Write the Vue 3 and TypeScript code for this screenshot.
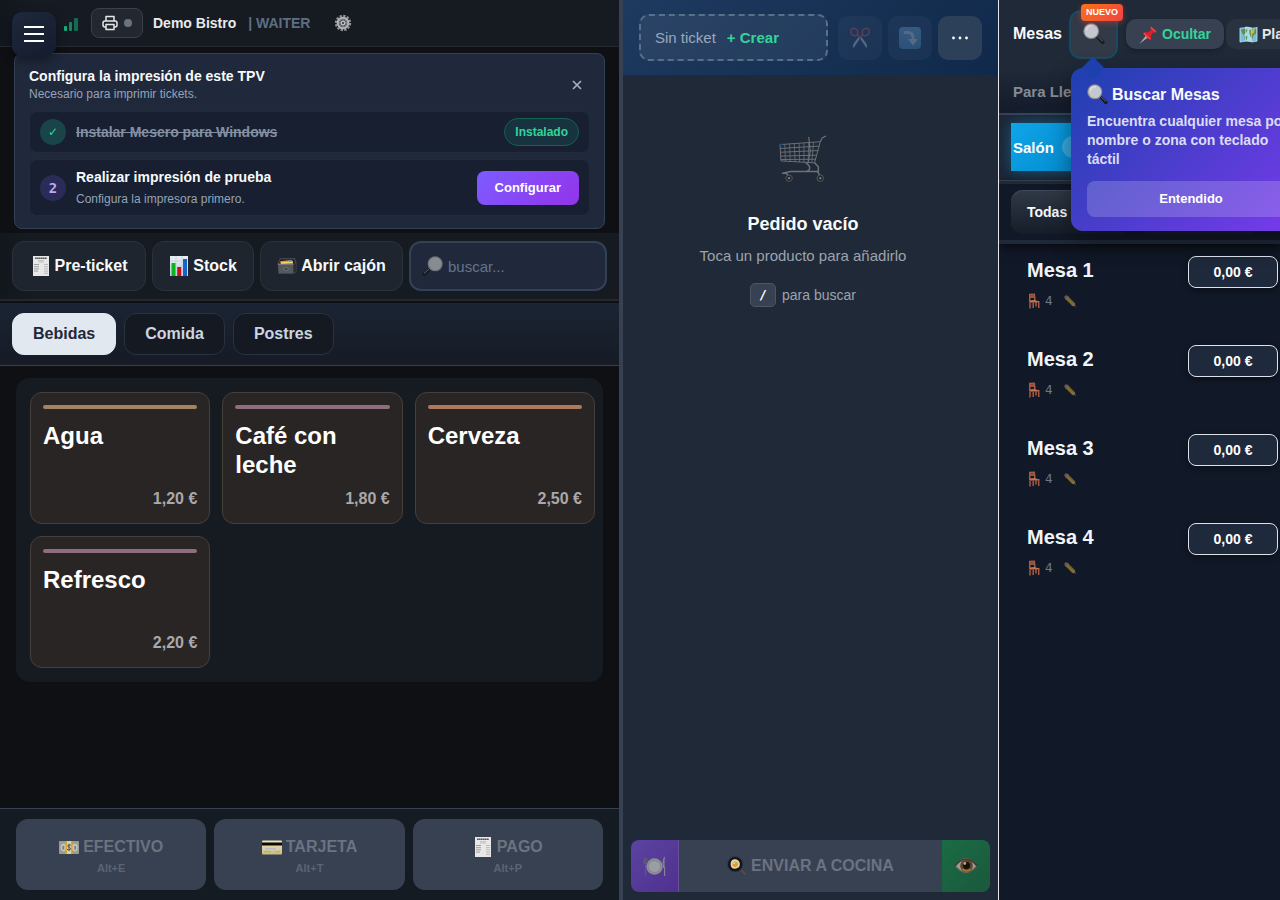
<script setup lang="ts">
import { ref } from 'vue'

interface Product { name: string; price: string; tone: string }
interface Payment { label: string; key: string; icon: string }

const categories = ['Bebidas', 'Comida', 'Postres']
const activeCategory = ref('Bebidas')
const query = ref('')

const products: Product[] = [
  { name: 'Agua', price: '1,20 €', tone: 'sand' },
  { name: 'Café con leche', price: '1,80 €', tone: 'mauve' },
  { name: 'Cerveza', price: '2,50 €', tone: 'copper' },
  { name: 'Refresco', price: '2,20 €', tone: 'mauve' },
]

const payments: Payment[] = [
  { label: 'EFECTIVO', key: 'Alt+E', icon: 'cash' },
  { label: 'TARJETA', key: 'Alt+T', icon: 'card' },
  { label: 'PAGO', key: 'Alt+P', icon: 'receipt' },
]

const tables = ['Mesa 1', 'Mesa 2', 'Mesa 3', 'Mesa 4']
</script>

<template>
  <div class="app">
    <svg class="sprite" aria-hidden="true">
      <defs>
        <linearGradient id="g-sheet" x1="0" y1="0" x2="0" y2="1"><stop offset="0" stop-color="#e9eef2" /><stop offset="1" stop-color="#bcd4e6" /></linearGradient>
        <linearGradient id="g-key" x1="0" y1="0" x2="0" y2="1"><stop offset="0" stop-color="#6f9cc6" /><stop offset="1" stop-color="#4f86b8" /></linearGradient>
        <linearGradient id="g-card" x1="0" y1="0" x2="0" y2="1"><stop offset="0" stop-color="#f0e6b8" /><stop offset="1" stop-color="#c9bb83" /></linearGradient>
      </defs>
      <symbol id="receipt" viewBox="0 0 20 20">
        <path d="M2 0h16v20H2z" fill="#e8e8e8" />
        <path d="M4 2.2h12" stroke="#555" stroke-width="1.6" stroke-dasharray="1.6 .3" />
        <path d="M7 4.6h6M7 6h6" stroke="#b0b0b0" stroke-width=".7" />
        <path d="M3 8.500h5M3 10.700h5M3 12.900h5M3 15.100h4" stroke="#8c8c8c" stroke-width=".8" />
        <path d="M13 8.500h4M13 10.700h4M13 12.900h4M13 15.100h4M13 17.300h4" stroke="#acacac" stroke-width=".8" />
      </symbol>
      <symbol id="chart" viewBox="0 0 20 20">
        <path d="M1 0h18v20H1z" fill="url(#g-sheet)" />
        <path d="M1 5h18M1 10h18M1 15h18M7 0v20M13 0v20" stroke="#b4c4d0" stroke-width=".5" />
        <path d="M2.500 7h4v13h-4z" fill="#08b51c" /><path d="M8.200 11h4v9h-4z" fill="#c90f16" /><path d="M14 3h4v17h-4z" fill="#1463cf" />
      </symbol>
      <symbol id="drawer" viewBox="0 0 20 20">
        <path d="M3 2h15l1.500 4v10l-3 2H1.500L.6 7z" fill="#42464a" />
        <path d="M3.400 3.400h13.800l.6 4.200H2z" fill="#16191c" />
        <path d="M3 5.200 14.500 4l1.800 1.800L4 8z" fill="#f29a24" /><path d="M3.800 6.600 16 5.400v2L4 8z" fill="#ffd36a" /><path d="m11 4.200 4-.3.4 1.600-3 .2z" fill="#548fc4" />
        <path d="M1 8.200h15.400V17H1.800z" fill="#54595d" /><path d="m16.400 8.200 2.600-1v8.400L16.400 17z" fill="#2b2e31" />
        <path d="M1 8.200h15.400" stroke="#92979b" stroke-width=".8" /><path d="M7 12h4v2H7z" fill="#2b2e31" stroke="#969a9d" stroke-width=".5" />
      </symbol>
      <symbol id="lens" viewBox="0 0 22 22">
        <path d="m12.500 14 2-2 6.700 6.100c1.300 1.500-.9 3.900-2.500 2.700z" fill="#17191c" /><path d="m14.300 13.200 5.600 5.200" stroke="#63686d" stroke-width="1" />
        <circle cx="8.200" cy="8.200" r="7.900" fill="#85898e" /><circle cx="8.200" cy="8.100" r="6.800" fill="#c6c8cf" /><path d="M3.500 7.200C4 4 6.200 2.600 9.400 3" stroke="#e3e4e8" fill="none" stroke-width="1.200" />
      </symbol>
      <symbol id="lens-left" viewBox="0 0 22 22">
        <path d="m9.500 14-2-2L.8 18.100c-1.300 1.500.9 3.900 2.500 2.700z" fill="#17191c" /><path d="m7.700 13.200-5.600 5.200" stroke="#63686d" stroke-width="1" />
        <circle cx="13.800" cy="8.200" r="7.900" fill="#6b7076" /><circle cx="13.800" cy="8.100" r="6.800" fill="#888b92" />
      </symbol>
      <symbol id="cash" viewBox="0 0 20 20">
        <path d="M0 4h20v13H0z" fill="#878b83" /><path d="M1 5h18v11H1z" fill="none" stroke="#b6b9ac" stroke-width=".7" />
        <ellipse cx="4.500" cy="10.500" rx="3" ry="4.200" fill="#bfc1ba" /><ellipse cx="15.800" cy="10.500" rx="3" ry="4.200" fill="#bfc1ba" />
        <path d="M3.500 9h1.600v3.500H3.500zM15.500 9h1.500v3.500h-1.500z" fill="#777c76" /><path d="M6.500 4h7v13h-7z" fill="#dba91f" /><path d="M8 4h4v13H8z" fill="#d9d1ac" />
        <path d="M11.800 8.300c-2.500-1.300-4.200.7-1.900 1.900 2.600 1 2.500 3.500-1.800 2.200M10 6.800v7.300" fill="none" stroke="#504f40" stroke-width="1" />
      </symbol>
      <symbol id="card" viewBox="0 0 20 20">
        <rect y="3.500" width="20" height="14" rx="1" fill="url(#g-card)" /><path d="M0 5.500h20v3H0z" fill="#08090a" /><path d="M2 11h14v1.600H2z" fill="#cfd3d6" /><path d="M3 11.800h11" stroke="#8f9dad" stroke-width=".6" /><path d="M2 14.700h7M13 14.700h5" stroke="#aaa06e" stroke-width=".7" />
      </symbol>
      <symbol id="gear" viewBox="0 0 20 20">
        <circle cx="10" cy="10" r="7.900" fill="none" stroke="#8f9297" stroke-width="2.400" stroke-dasharray="2.600 1.536" />
        <circle cx="10" cy="10" r="6" fill="#8d9095" stroke="#b4b6ba" stroke-width="2" />
        <circle cx="10" cy="10" r="4.300" fill="#55585e" /><path d="M10 5.500v9M5.500 10h9M7 7l6 6M13 7l-6 6" stroke="#9b9da2" stroke-width=".9" />
        <circle cx="10" cy="10" r="2.600" fill="#c0c2c5" /><circle cx="10" cy="10" r="1.200" fill="#303239" />
      </symbol>
      <symbol id="scissors" viewBox="0 0 24 24">
        <path d="m11 11 8 12c1.500-2 .5-4.500-1.100-6.500L13 10zM13 11 5 23c-1.500-2-.5-4.500 1.100-6.500L11 10z" fill="#b4bcc4" />
        <g fill="none" stroke="#c04e61" stroke-width="1.800"><ellipse cx="5.800" cy="5.500" rx="3.700" ry="4.200" transform="rotate(-35 5.800 5.500)" /><ellipse cx="18.200" cy="5.500" rx="3.700" ry="4.200" transform="rotate(35 18.200 5.500)" /><path d="m9 8 3 4 3-4" /></g>
      </symbol>
      <symbol id="turn-down" viewBox="0 0 24 24">
        <rect x="1" y="1" width="22" height="22" rx="4" fill="url(#g-key)" />
        <path d="M6 6.500h4c4 0 5 2 5 5V14" fill="none" stroke="#b7c6d4" stroke-width="3" /><path d="M10 13h10l-5 6.500z" fill="#b7c6d4" />
      </symbol>
      <symbol id="cart" viewBox="0 0 50 50">
        <g fill="none" stroke="#9a9a9b" stroke-width="1">
          <path d="M1 10 43 7l-6 22-35-2zM1 14l41-2.500M1.300 18l39.500-1.800M1.600 22l38-1M2 25.500l36.500-.2" />
          <path d="m6 9.700.7 17.600M11 9.300l.7 18.200M16 9l.7 18.800M21 8.600l.4 19.500M26 8.200v20.200M31 8l-.7 20.500M36 7.500l-1.800 21.300" stroke-width=".8" />
          <path d="m43 7 2-4 4-2M31 2l1.500 15-2 11" stroke-width="1.200" /><path d="m37 29 4 4v5H12l-9 2M28 29c6 4 5 9-2 9M7 39l3 4M40 38l3 5" stroke-width="1.500" />
        </g>
        <circle cx="10.500" cy="45" r="3.400" fill="#25282b" stroke="#737373" /><circle cx="43" cy="45" r="3.400" fill="#25282b" stroke="#737373" /><circle cx="10.500" cy="45" r="1.200" fill="#aaa" /><circle cx="43" cy="45" r="1.200" fill="#aaa" />
        <path d="M1 9h3v2H1z" fill="#2161aa" />
      </symbol>
      <symbol id="plate" viewBox="0 0 24 24">
        <circle cx="12" cy="12" r="8.500" fill="#8c8f94" /><circle cx="12" cy="12" r="6.300" fill="#9a9da2" stroke="#7f8288" stroke-width=".8" />
        <path d="M1 3v5q1.500 2 3 0V3M2.500 3v19" fill="none" stroke="#5d5a72" stroke-width="1.200" /><path d="M22.500 2q-2.500 5-1 11h1v9" fill="#83858f" stroke="#83858f" stroke-width="1.200" />
      </symbol>
      <symbol id="pan" viewBox="0 0 22 22">
        <path d="m14 14 6.500 6.500" stroke="#5f4a42" stroke-width="2" /><circle cx="9" cy="9" r="8.500" fill="#14171a" stroke="#373a3d" /><path d="M4 9c0-5 4-6 7-5 4 2 4 7 1 9-4 2-8 1-8-4z" fill="#dbd5bd" /><circle cx="9" cy="9" r="3" fill="#e89a23" /><circle cx="8" cy="8" r="1.100" fill="#ffd75f" />
      </symbol>
      <symbol id="eye" viewBox="0 0 24 24">
        <path d="M1 12Q12-4 23 12 12 26 1 12z" fill="#7b6360" /><path d="M2 12Q12 0 22 12q-10 11-20 0z" fill="#9c9a9d" /><circle cx="12.500" cy="11.800" r="6.300" fill="#5f4520" /><path d="M8.500 15q4 4 8 0" fill="none" stroke="#a97f2b" stroke-width="1.600" /><circle cx="12.500" cy="11.500" r="3.500" fill="#13110f" /><circle cx="10.800" cy="9.500" r="1.400" fill="#a8a8a8" /><path d="M1 12Q12-2 23 12" fill="none" stroke="#43322f" stroke-width="1.200" />
      </symbol>
      <symbol id="pin" viewBox="0 0 20 20">
        <path d="m7 11.500 2 2-8.500 6.200z" fill="#a6adb4" /><path d="m12.500 1.500 6 5.700q-1.500 2-3.600.3l-2.400 3.800q1 3.600-.8 4.800L4 9q1.500-2 5-1l3.700-2.600q-1.700-1.900-.2-3.900z" fill="#d8232d" /><path d="m12.700 2.500 4.800 4.400M5.300 8.900l6 5.800" stroke="#f2565a" stroke-width="1.200" />
      </symbol>
      <symbol id="map" viewBox="0 0 20 20">
        <path d="m1 3 6-1 6 1 6-1v15l-6 1-6-1-6 1z" fill="#78bfdd" /><path d="m7 2 6 1v15l-6-1z" fill="#a6dce9" />
        <path d="m2 5 4-1 3 1-1 3-2 1-1 2-2-3zM6 11l3 1-1 4-2-1zM11 5l7-1v5l-3 2-1 4-2-3-1-3z" fill="#688945" /><path d="m13 5 4-1-1 4-2 2z" fill="#cbb150" /><path d="M1 3v15l6-1V2l6 1v15l6-1V2" fill="none" stroke="#d7e8ef" stroke-width=".7" />
      </symbol>
      <symbol id="chair" viewBox="0 0 14 16">
        <path d="m2 .8 6-.3.3 4.200L2 5z" fill="#a65b43" /><path d="M2.700 4.500v5M7.700 4v4M2 8.800h10.500M3 10v5.500M6.200 10v5M11.700 9v6M9 9v4.500" stroke="#a65b43" stroke-width="1.500" /><path d="m2.500 7.500 5-.6 5 1.800-9 .8z" fill="#c37450" /><path d="M3 12.500h3M3.500 2.700h3" stroke="#6b3428" stroke-width=".7" />
      </symbol>
      <symbol id="pencil" viewBox="0 0 14 14">
        <path d="m4.500 1.200 7.800 7.800 1.400 4.800L9 12.300 1.200 4.500z" fill="#8a7428" /><path d="m1.200 4.500 3.300-3.300Q2.800-.3 1 1-.3 2.800 1.200 4.500z" fill="#9a5767" /><path d="m1.200 4.500 3.300-3.300 1.100 1.100-3.300 3.300z" fill="#718089" /><path d="m4 4.500 6.500 6.500" stroke="#a88d2e" stroke-width="1.400" /><path d="m12.300 9 1.400 4.800L9 12.300z" fill="#9b8570" /><path d="m13 11.600.7 2.200-2.200-.7z" fill="#111" />
      </symbol>
    </svg>

    <main class="sales">
      <header class="topbar">
        <button class="menu" aria-label="Menú"><span></span><span></span><span></span></button>
        <div class="signal" aria-label="Conexión"><i class="low"></i><i class="mid"></i><i class="high"></i></div>
        <button class="printer" aria-label="Impresora">
          <svg viewBox="0 0 16 16" width="16" height="16" fill="none" stroke="#e5e7eb" stroke-width="1.500" stroke-linejoin="round"><path d="M4 6V1.500h8V6M4 12H3a2 2 0 0 1-2-2V8a2 2 0 0 1 2-2h10a2 2 0 0 1 2 2v2a2 2 0 0 1-2 2h-1" /><path d="M4 9.500h8v5H4z" /></svg>
          <span class="dot"></span>
        </button>
        <strong class="venue">Demo Bistro</strong><span class="role">| WAITER</span>
        <button class="plain settings" aria-label="Ajustes"><svg width="18" height="18"><use href="#gear" /></svg></button>
      </header>

      <section class="setup">
        <div class="setup-head">
          <div><h2>Configura la impresión de este TPV</h2><p>Necesario para imprimir tickets.</p></div>
          <button class="plain close" aria-label="Cerrar"><svg width="10" height="10" viewBox="0 0 10 10"><path d="m1 1 8 8M9 1 1 9" stroke="#a3b0c4" stroke-width="1.700" /></svg></button>
        </div>
        <div class="step">
          <span class="num done">✓</span><div class="step-text"><s>Instalar Mesero para Windows</s></div><span class="pill">Instalado</span>
        </div>
        <div class="step tall">
          <span class="num">2</span><div class="step-text"><strong>Realizar impresión de prueba</strong><p>Configura la impresora primero.</p></div><button class="configure">Configurar</button>
        </div>
      </section>

      <div class="toolbar">
        <button><svg width="20" height="20"><use href="#receipt" /></svg>Pre-ticket</button>
        <button><svg width="20" height="20"><use href="#chart" /></svg>Stock</button>
        <button><svg width="20" height="20"><use href="#drawer" /></svg>Abrir cajón</button>
        <label class="search"><svg width="21" height="21"><use href="#lens-left" /></svg><input v-model="query" type="text" placeholder="buscar..." aria-label="Buscar" /></label>
      </div>

      <nav class="cats">
        <button v-for="c in categories" :key="c" :class="{ active: c === activeCategory }" @click="activeCategory = c">{{ c }}</button>
      </nav>

      <div class="catalog">
        <div class="products">
          <button v-for="p in products" :key="p.name" class="product">
            <span class="stripe" :class="p.tone"></span><span class="pname">{{ p.name }}</span><span class="price">{{ p.price }}</span>
          </button>
        </div>
      </div>

      <footer class="payments">
        <button v-for="p in payments" :key="p.key" disabled>
          <span class="pay"><svg width="20" height="20"><use :href="'#' + p.icon" /></svg>{{ p.label }}</span><small>{{ p.key }}</small>
        </button>
      </footer>
    </main>

    <section class="order">
      <header class="order-head">
        <button class="ticket"><span>Sin ticket</span><b>+ Crear</b></button>
        <div class="order-tools">
          <button class="dim" disabled aria-label="Dividir"><svg width="22" height="22"><use href="#scissors" /></svg></button>
          <button class="dim" disabled aria-label="Mover"><svg width="24" height="24"><use href="#turn-down" /></svg></button>
          <button aria-label="Más"><svg width="16" height="4" viewBox="0 0 16 4" fill="#fff"><circle cx="1.500" cy="2" r="1.400" /><circle cx="8" cy="2" r="1.400" /><circle cx="14.500" cy="2" r="1.400" /></svg></button>
        </div>
      </header>
      <div class="empty">
        <svg class="cart" width="48" height="48"><use href="#cart" /></svg>
        <h2>Pedido vacío</h2>
        <p>Toca un producto para añadirlo</p>
        <div class="hint"><kbd>/</kbd><span>para buscar</span></div>
      </div>
      <footer class="send">
        <button class="course" disabled aria-label="Servir"><svg width="23" height="23"><use href="#plate" /></svg></button>
        <button class="kitchen" disabled><svg width="20" height="20"><use href="#pan" /></svg>ENVIAR A COCINA</button>
        <button class="view" disabled aria-label="Ver"><svg width="24" height="24"><use href="#eye" /></svg></button>
      </footer>
    </section>

    <aside class="side">
      <header class="side-head">
        <h2>Mesas</h2>
        <div class="find-wrap">
          <button class="find" aria-label="Buscar mesas"><svg width="22" height="22"><use href="#lens" /></svg></button>
          <span class="new">NUEVO</span>
          <div class="pop">
            <h3><svg width="21" height="21"><use href="#lens" /></svg>Buscar Mesas</h3>
            <p>Encuentra cualquier mesa por nombre o zona con teclado táctil</p>
            <button>Entendido</button>
          </div>
        </div>
        <button class="chip hide"><svg width="19" height="19"><use href="#pin" /></svg>Ocultar</button>
        <button class="chip plan"><svg width="19" height="19"><use href="#map" /></svg>Plano</button>
      </header>
      <div class="takeaway"><button class="plain">Para Llevar</button></div>
      <div class="zones"><button>Salón<span class="count"></span></button></div>
      <div class="filters"><button>Todas</button><button aria-label="Libres"></button></div>
      <ul class="tables">
        <li v-for="t in tables" :key="t">
          <div><h3>{{ t }}</h3><div class="seats"><svg width="14" height="16"><use href="#chair" /></svg><span>4</span><button class="plain" aria-label="Editar"><svg width="12" height="12"><use href="#pencil" /></svg></button></div></div>
          <button class="total">0,00 €</button>
        </li>
      </ul>
    </aside>
  </div>
</template>

<style>
body { margin: 0; background: #0f1014; }
</style>

<style scoped>
.app { display: grid; grid-template-columns: minmax(0, 623fr) minmax(0, 376fr) minmax(0, 281fr); height: 100vh; overflow: hidden; font-family: "Liberation Sans", Arial, sans-serif; color: #f8fafc; }
.app *, .app *::before, .app *::after { box-sizing: border-box; }
.sprite { position: absolute; width: 0; height: 0; }
button { font-family: inherit; font-weight: 700; color: inherit; margin: 0; padding: 0; border: 0; display: flex; align-items: center; justify-content: center; white-space: nowrap; }
h2, h3, p, ul { margin: 0; padding: 0; }
svg { display: block; flex: none; }
.plain { background: none; }

.sales { display: flex; flex-direction: column; border-right: 4px solid #374151; background: #0f1014; min-width: 0; }
.topbar { display: flex; align-items: center; height: 47px; flex: none; padding: 0 12px; background: linear-gradient(90deg, #12161d, #161b23 5%, #161b22); border-bottom: 1px solid #252a33; }
.menu { position: relative; z-index: 2; align-self: flex-start; flex: none; flex-direction: column; gap: 5px; width: 44px; height: 44px; margin-top: 12px; border-radius: 10px; background: linear-gradient(145deg, #1e293b, #151b30); box-shadow: 0 4px 12px rgba(0, 0, 0, .4); }
.menu span { width: 20px; height: 2px; background: #fff; }
.signal { display: flex; align-items: flex-end; gap: 2px; height: 14px; margin: 2px 13px 0 8px; }
.signal i { width: 3px; border-radius: 1px; background: #136b52; }
.signal .low { height: 5px; background: #10b27c; }
.signal .mid { height: 9px; background: #138460; }
.signal .high { height: 13px; width: 4px; }
.printer { gap: 6px; width: 52px; height: 30px; border: 1px solid #3b404a; border-radius: 8px; background: #232830; }
.dot { width: 8px; height: 8px; border-radius: 50%; background: #6b7280; }
.venue { margin-left: 10px; font-size: 14px; color: #e8eaed; white-space: nowrap; }
.role { margin-left: 12px; font-size: 14px; font-weight: 700; color: #5e6d84; white-space: nowrap; }
.settings { margin-left: 24px; }

.setup { margin: 6px 14px 4px; padding: 13px 14px 12px; border: 1px solid #334155; border-radius: 8px; background: #1f293b; }
.setup-head { display: flex; align-items: center; justify-content: space-between; padding: 0 8px 8px 0; }
.setup-head h2 { font-size: 14px; line-height: 18px; }
.setup-head p, .step p { font-size: 12px; line-height: 18px; color: #94a3b8; }
.close { width: 10px; height: 10px; }
.step { display: flex; align-items: center; gap: 10px; height: 42px; padding: 0 10px; border: 1px solid #212b3c; border-radius: 8px; background: #171f31; }
.step.tall { height: 57px; margin-top: 6px; }
.step-text { flex: 1; font-size: 14px; line-height: 18px; font-weight: 700; }
.step-text s { color: #8390a4; font-weight: 700; }
.step-text p { font-weight: 400; margin-top: 4px; font-size: 12px; }
.num { display: grid; place-items: center; width: 26px; height: 26px; border-radius: 50%; background: #2b2b58; color: #b9a9fa; font: 700 14px "DejaVu Sans Mono", monospace; }
.num.done { background: #194449; color: #34d399; font: 700 12px "DejaVu Sans", sans-serif; }
.pill { padding: 0 10px; border: 1px solid #12624f; border-radius: 14px; background: #183340; color: #34d399; font-size: 12px; font-weight: 700; line-height: 26px; }
.configure { height: 34px; padding: 0 18px; border-radius: 8px; background: linear-gradient(135deg, #7c5cff, #9333ea); font-size: 13px; color: #fff; }

.toolbar { display: grid; grid-template-columns: 134fr 102fr 143fr 198fr; gap: 6px; padding: 8px 12px; height: 68px; border-bottom: 2px solid #24282e; background: linear-gradient(90deg, #12161d, #161b22 5%); }
.toolbar button { gap: 4px; height: 50px; border: 1px solid #2b323b; border-radius: 12px; background: #1f252e; font-size: 16px; }
.search { display: flex; align-items: center; gap: 5px; height: 50px; padding: 0 11px; border: 2px solid #334155; border-radius: 12px; background: #1f293b; }
.search input { width: 100%; min-width: 0; padding: 0; border: 0; outline: 0; background: none; color: #f8fafc; font: 15px "Liberation Sans", Arial, sans-serif; }
.search input::placeholder { color: #64748b; opacity: 1; }

.cats { display: flex; gap: 8px; margin-top: 2px; padding: 10px 12px; border-bottom: 1px solid #334155; background: linear-gradient(180deg, #1a2433, #161b25); }
.cats button { height: 42px; padding: 0 20px; border: 1px solid #2a3240; border-radius: 12px; background: #151a22; color: #cbd5e1; font-size: 16px; }
.cats .active { background: #e2e8f0; border-color: #e2e8f0; color: #1e293b; }

.catalog { flex: 1; padding: 12px 16px; min-height: 0; }
.products { display: grid; grid-template-columns: repeat(3, minmax(0, 1fr)); gap: 12px; padding: 14px 8px 14px 14px; border-radius: 14px; background: #161b22; }
.product { flex-direction: column; align-items: stretch; justify-content: flex-start; min-height: 132px; padding: 12px; border: 1px solid #46403b; border-radius: 12px; background: #292524; text-align: left; white-space: normal; }
.stripe { height: 4px; border-radius: 2px; }
.sand { background: #a28363; }
.mauve { background: #8f6d7e; }
.copper { background: #ac795a; }
.pname { margin-top: 12px; font-size: 24px; line-height: 29px; color: #fff; }
.price { margin-top: auto; font-size: 16px; line-height: 24px; text-align: right; color: #aaa8aa; }

.payments { display: grid; grid-template-columns: repeat(3, 1fr); gap: 8px; padding: 10px 16px; border-top: 1px solid #374151; background: #151b23; }
.payments button { flex-direction: column; gap: 2px; height: 71px; border-radius: 12px; background: #384152; color: #6b7280; }
.pay { display: flex; align-items: center; gap: 4px; font-size: 16px; line-height: 24px; }
.payments small { font-size: 11px; line-height: 14px; color: #5b6473; }

.order { display: flex; flex-direction: column; min-width: 0; border-right: 1px solid #e5e7eb; background: #1f2937; }
.order-head { display: flex; align-items: center; gap: 10px; height: 75px; padding: 0 16px; background: linear-gradient(135deg, #1e3a5f, #10294a); }
.ticket { flex: 1; min-width: 0; justify-content: flex-start; gap: 11px; height: 47px; padding: 0 14px; border: 2px dashed #587089; border-radius: 10px; background: rgba(255, 255, 255, .06); font-size: 15px; }
.ticket span { font-weight: 400; color: #9ba8bb; }
.ticket b { color: #34d399; }
.order-tools { display: flex; gap: 6px; }
.order-tools button { width: 44px; height: 44px; border-radius: 10px; background: #2c405a; }
.order-tools .dim { opacity: .4; background: rgba(255, 255, 255, .09); }
.empty { flex: 1; display: flex; flex-direction: column; align-items: center; padding: 60px 15px 0 0; }
.cart { opacity: .65; }
.empty h2 { margin-top: 30px; font-size: 18px; line-height: 22px; }
.empty p { margin-top: 11px; font-size: 15px; line-height: 20px; color: #9ca3af; }
.hint { display: flex; align-items: center; gap: 6px; margin-top: 17px; font-size: 14px; color: #9ca3af; }
kbd { width: 26px; height: 24px; border: 1px solid #4b5563; border-radius: 5px; background: #374151; color: #fff; font: 700 13px/22px "DejaVu Sans Mono", monospace; text-align: center; }
.send { display: flex; margin: 8px; height: 52px; border-radius: 8px; overflow: hidden; }
.send button { height: 52px; }
.course { width: 48px; border-right: 1px solid #65519f; background: linear-gradient(135deg, #5b44a0, #50308e); }
.kitchen { flex: 1; gap: 4px; background: #384152; color: #6b7280; font-size: 16px; }
.view { width: 48px; background: linear-gradient(135deg, #1a6c44, #1b583c); }

.side { display: flex; flex-direction: column; min-width: 0; overflow: hidden; background: #111827; }
.side-head { position: relative; z-index: 3; display: flex; align-items: center; height: 68px; flex: none; padding-left: 14px; background: #1f2937; }
.side-head h2 { width: 56px; flex: none; font-size: 16px; }
.find-wrap { position: relative; flex: none; margin-right: 8px; }
.find { width: 49px; height: 49px; border: 2px solid #1b4961; border-radius: 12px; background: #313a46; }
.new { position: absolute; top: -6px; left: 12px; z-index: 1; padding: 0 5px; border-radius: 4px; background: linear-gradient(135deg, #f97316, #ef4444); box-shadow: 0 2px 6px rgba(239, 68, 68, .4); color: #fff; font-size: 9px; font-weight: 700; line-height: 17px; }
.pop { position: absolute; top: 58px; left: 2px; width: 240px; padding: 17px 16px 14px; border-radius: 12px; background: linear-gradient(135deg, #1e40af, #7c3aed); box-shadow: 0 10px 24px rgba(0, 0, 0, .4); }
.pop::before { content: ""; position: absolute; top: -8px; left: 14px; width: 16px; height: 16px; transform: rotate(45deg); background: #1e40af; }
.pop h3 { display: flex; align-items: center; gap: 4px; font-size: 16px; line-height: 20px; height: 20px; }
.pop p { margin-top: 7px; font-size: 14px; line-height: 19px; font-weight: 700; color: #dadcf6; }
.pop button { width: 100%; height: 36px; margin-top: 12px; border-radius: 8px; background: rgba(255, 255, 255, .18); font-size: 13px; color: #fff; }
.chip { flex: none; gap: 4px; height: 30px; padding: 0 13px; border-radius: 10px; font-size: 14px; }
.hide { background: #374151; color: #34d399; box-shadow: 0 2px 4px rgba(0, 0, 0, .25); }
.plan { margin-left: 2px; background: #293340; color: #e5e7eb; }
.takeaway { height: 47px; flex: none; padding: 15px 14px 0; border-bottom: 2px solid #374151; background: linear-gradient(180deg, #1f2937, #141b2b); }
.takeaway button { font-size: 15px; line-height: 18px; color: #858b96; }
.zones { height: 66px; flex: none; padding: 8px 12px; border-bottom: 1px solid #414957; background: #1c2636; }
.zones button { width: 96px; height: 48px; justify-content: flex-start; gap: 8px; padding-left: 2px; background: linear-gradient(135deg, #0ea5e9, #0284c7); box-shadow: 0 0 14px rgba(14, 165, 233, .4); font-size: 15px; color: #fff; }
.count { width: 24px; height: 22px; border-radius: 11px; background: rgba(255, 255, 255, .2); }
.filters { display: flex; gap: 8px; height: 63px; flex: none; padding: 6px 12px; border-top: 3px solid #1f2937; border-bottom: 4px solid #1f2937; box-shadow: 0 3px 10px rgba(0, 0, 0, .6); }
.filters button { flex: none; width: 120px; height: 44px; justify-content: flex-start; padding-left: 16px; border-radius: 12px; background: linear-gradient(180deg, #303947, #161d29); box-shadow: inset 0 1px #3e4755; font-size: 14px; }
.tables { flex: 1; list-style: none; padding: 12px 2px 0 28px; }
.tables li { display: flex; justify-content: space-between; align-items: flex-start; height: 89px; }
.tables h3 { font-size: 20px; line-height: 28px; color: #f1f5f9; }
.seats { display: flex; align-items: center; height: 20px; margin-top: 7px; gap: 4px; color: #6b7a91; font: 12px "DejaVu Sans", sans-serif; }
.seats button { margin-left: 7px; opacity: .8; }
.total { width: 90px; height: 32px; border: 1px solid #dbe2ea; border-radius: 8px; background: #1e293b; box-shadow: 0 2px 6px rgba(0, 0, 0, .4); font-size: 14px; color: #fff; }
</style>
